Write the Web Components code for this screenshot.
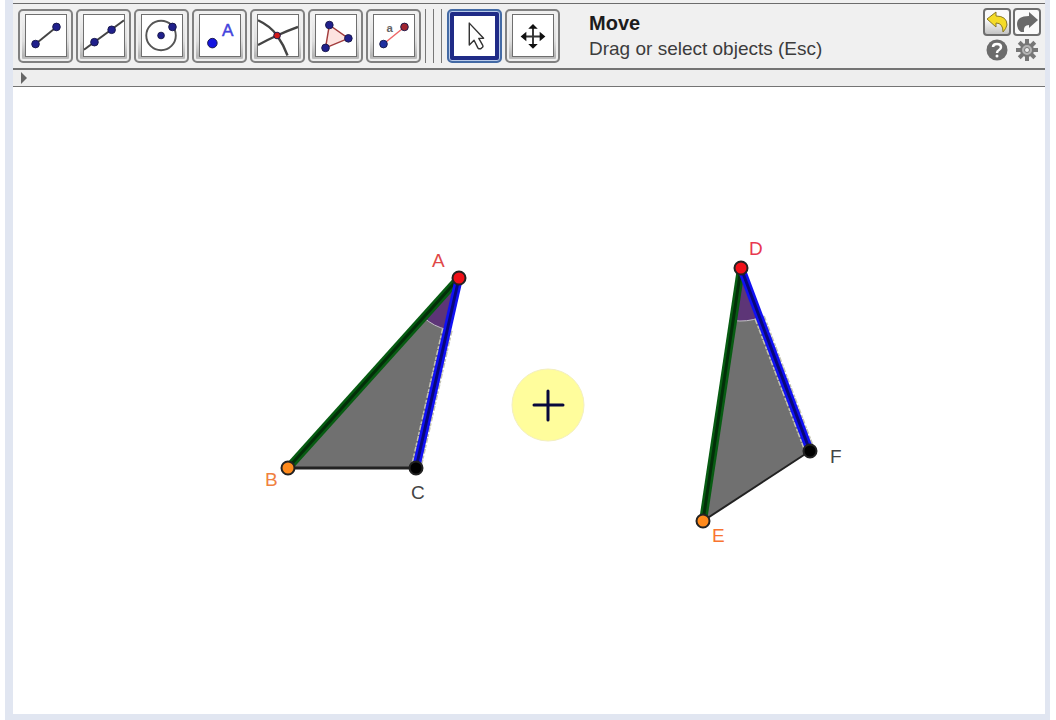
<!DOCTYPE html>
<html lang="en">
<head>
<meta charset="utf-8">
<meta name="viewport" content="width=device-width, initial-scale=1">
<title>Geometry</title>
<style>
body {
  margin: 0;
  background: #fff;
  font-family: "Liberation Sans", Arial, sans-serif;
}
</style>
</head>
<body>
<geo-window>
  <geo-toolbar slot="toolbar" label="Move" help="Drag or select objects (Esc)"></geo-toolbar>
  <geo-view slot="view"></geo-view>
</geo-window>

<script>
'use strict';

const dot = (x, y, r = 4, fill = '#20208c') =>
  `<circle cx="${x}" cy="${y}" r="${r}" fill="${fill}" stroke="#17174a"/>`;

const ICONS = {
  segment: `<path d="M10 30L32 12" stroke="#444" stroke-width="2"/>${dot(10, 30)}${dot(32, 12)}`,
  line: `<path d="M0 36L42 5" stroke="#444" stroke-width="2"/>${dot(11, 28)}${dot(29, 15)}`,
  circle: `<circle cx="20" cy="21" r="15.500" fill="none" stroke="#555" stroke-width="2"/>${dot(20, 21, 3.500)}${dot(32, 12)}`,
  point: `${dot(13, 29, 5, '#1515e0')}<text x="23" y="22" font-size="18" fill="#4343dc" stroke="#4343dc" stroke-width=".5">A</text>`,
  intersect: `<path d="M0 5Q13 11 20 21T31 42M0 31Q9 26 20 21T42 12" fill="none" stroke="#444" stroke-width="2.500"/>${dot(20, 21, 3.500, '#d01818')}`,
  polygon: `<path d="M14 10L34 24L10 34Z" fill="#fde3e0" stroke="#a23c3c" stroke-width="1.500"/>${dot(14, 10)}${dot(34, 24)}${dot(10, 34)}`,
  mirror: `<path d="M10 30L32 12" stroke="#e66" stroke-width="1.500"/>${dot(10, 30, 4, '#2030a0')}${dot(32, 12, 4, '#a02430')}<text x="13" y="17" font-size="12" font-weight="bold" fill="#666">a</text>`,
  arrow: `<path d="M15 8V31L20 26L24 34Q26 36 28 34Q30 33 29 31L25 24H30Z" fill="#fff" stroke="#333" stroke-width="1.500" stroke-linejoin="round"/>`,
  move: `<path d="M21 12V32M11 22H31" stroke="#333" stroke-width="2"/><path d="M21 9L26 14H16ZM21 35L26 30H16ZM8 22L14 17V27ZM34 22L28 17V27Z" fill="#111"/>`
};

class ToolButton extends HTMLElement {
  constructor() {
    super();
    this.attachShadow({mode: 'open'});
  }

  connectedCallback() {
    this.shadowRoot.innerHTML = `
<style>
:host {
  display: block;
}

button {
  box-sizing: border-box;
  display: flex;
  justify-content: center;
  align-items: center;
  width: 55px;
  height: 54px;
  padding: 0 0 1px 1px;
  border: 2px solid #818181;
  border-radius: 5px;
  background: linear-gradient(#f4f4f4, #dedede 60%, #b4b4b4 90%, #c8c8c8);
  box-shadow: inset 0 0 0 2px #efefef;
  font: inherit;
}

svg {
  box-sizing: border-box;
  width: 42px;
  height: 43px;
  border: 1px solid #6f6f6f;
  background: #fff;
}

:host([selected]) button {
  border-color: #436aa5;
  background: #fff;
  box-shadow: inset 0 0 0 1px #b9cbea, inset 0 0 0 5px #1f2b87;
}

:host([selected]) svg {
  border-color: transparent;
  background: none;
}
</style>
<button type="button" aria-label="${this.getAttribute('icon')}">
  <svg viewBox="0 0 42 42" aria-hidden="true">${ICONS[this.getAttribute('icon')]}</svg>
</button>
`;
  }
}

class GeoActions extends HTMLElement {
  constructor() {
    super();
    const teeth = [0, 45, 90, 135, 180, 225, 270, 315].map(angle =>
      `<path d="M12 1V7" transform="rotate(${angle} 12 12)" stroke="#777" stroke-width="4"/>`
    ).join('');
    this.attachShadow({mode: 'open'}).innerHTML = `
<style>
:host {
  display: grid;
  grid-template-columns: 28px 28px;
  column-gap: 2px;
}

button {
  box-sizing: border-box;
  display: flex;
  align-items: center;
  justify-content: center;
  height: 28px;
  padding: 0;
  border: 2px solid #6e6e6e;
  border-radius: 4px;
  background: #fafafa;
}

.undo {
  background: linear-gradient(#fafafa 40%, #c4c4c4);
}

.plain {
  border: none;
  background: none;
}

svg {
  width: 24px;
  height: 24px;
}
</style>
<button class="undo" type="button" aria-label="Undo">
  <svg viewBox="0 0 24 24"><path d="M2 9L11 2V6Q22 6 22 15Q21 19 18 22Q18 13 11 13V17Z" fill="#f5dc28" stroke="#8b7a26"/></svg>
</button>
<button type="button" aria-label="Redo">
  <svg viewBox="0 0 24 24"><path d="M23 10L14 2V6Q2 6 2 14Q2 19 6 22H9Q8 15 14 15V18Z" fill="#696969"/></svg>
</button>
<button class="plain" type="button" aria-label="Help">
  <svg viewBox="0 0 24 24"><circle cx="12" cy="12" r="10.500" fill="#6c6c6c"/><path d="M8 9Q8 6 12 6T16 9Q16 11 14 12T12 15" fill="none" stroke="#fff" stroke-width="2.500"/><circle cx="12" cy="18" r="1.500" fill="#fff"/></svg>
</button>
<button class="plain" type="button" aria-label="Settings">
  <svg viewBox="0 0 24 24">${teeth}<circle cx="12" cy="12" r="6" fill="#b4b4b4" stroke="#777" stroke-width="2"/><circle cx="12" cy="12" r="2.500" fill="#eee" stroke="#777"/></svg>
</button>
`;
  }
}

class GeoToolbar extends HTMLElement {
  constructor() {
    super();
    this.attachShadow({mode: 'open'}).innerHTML = `
<style>
:host {
  display: flex;
  align-items: center;
  gap: 4px;
  padding: 4px 4px 4px 5px;
  border-top: 1px solid #6c6c6c;
  border-bottom: 2px solid #747474;
  background: #f0f0f0;
}

.tools {
  display: flex;
  gap: 3px;
}

.separators {
  display: flex;
  gap: 7px;
  height: 54px;
  margin-right: 1px;
}

.separators span {
  width: 1px;
  background: #777;
}

.help {
  flex: 1;
  margin-left: 25px;
  color: #3c3c3c;
  font-size: 19px;
  line-height: 25px;
}

.help strong {
  display: block;
  color: #1c1c1c;
  font-size: 20px;
}
</style>
<div class="tools">
  <tool-button icon="segment"></tool-button>
  <tool-button icon="line"></tool-button>
  <tool-button icon="circle"></tool-button>
  <tool-button icon="point"></tool-button>
  <tool-button icon="intersect"></tool-button>
  <tool-button icon="polygon"></tool-button>
  <tool-button icon="mirror"></tool-button>
</div>
<div class="separators"><span></span><span></span><span></span></div>
<div class="tools">
  <tool-button icon="arrow" selected></tool-button>
  <tool-button icon="move"></tool-button>
</div>
<div class="help"><strong></strong><span></span></div>
<geo-actions></geo-actions>
`;
  }

  connectedCallback() {
    this.shadowRoot.querySelector('.help strong').textContent = this.getAttribute('label');
    this.shadowRoot.querySelector('.help span').textContent = this.getAttribute('help');
  }
}

// 点の座標とラベルの位置
const TRIANGLES = [
  [
    {name: 'A', x: 459, y: 278, lx: 432, ly: 267, fill: '#f01018', color: '#e04848'},
    {name: 'B', x: 288, y: 468, lx: 265, ly: 486, fill: '#ff8a1c', color: '#f08040'},
    {name: 'C', x: 416, y: 468, lx: 411, ly: 499, fill: '#000', color: '#444'}
  ],
  [
    {name: 'D', x: 741, y: 268, lx: 749, ly: 255, fill: '#f01018', color: '#e83850'},
    {name: 'E', x: 703, y: 521, lx: 712, ly: 542, fill: '#ff8a1c', color: '#f87430'},
    {name: 'F', x: 810, y: 451, lx: 830, ly: 463, fill: '#000', color: '#444'}
  ]
];

class GeoView extends HTMLElement {
  constructor() {
    super();
    this.attachShadow({mode: 'open'}).innerHTML = `
<style>
:host {
  display: block;
  min-height: 0;
  background: #fff;
}

svg {
  display: block;
  width: 100%;
  height: 100%;
}

text {
  font-size: 19px;
}
</style>
<svg viewBox="13 87 1032 627" role="img" aria-label="Triangles ABC and DEF">
  ${TRIANGLES.map(triangle => this.drawTriangle(triangle)).join('')}
  <circle cx="548" cy="405" r="36" fill="#fffd9c" stroke="#f3efc0"/>
  <path d="M534 405H563M548 391V420" stroke="#08083c" stroke-width="3" stroke-linecap="round"/>
</svg>
`;
  }

  // 頂点から距離rだけ離れた辺上の点
  along(from, to, r) {
    const length = Math.hypot(to.x - from.x, to.y - from.y);
    return `${from.x + (to.x - from.x) * r / length} ${from.y + (to.y - from.y) * r / length}`;
  }

  drawTriangle([top, left, right]) {
    const start = this.along(top, right, 53);
    const arc = `A53 53 0 0 1 ${this.along(top, left, 53)}`;
    const side = (p, color) => `
<path d="M${top.x} ${top.y}L${p.x} ${p.y}" stroke="${color}" stroke-width="8"/>
<path d="M${top.x} ${top.y}L${p.x} ${p.y}" stroke="#000" stroke-opacity=".5" stroke-width="3"/>`;

    return `
<path d="M${top.x} ${top.y}L${left.x} ${left.y}L${right.x} ${right.y}Z" fill="#707070"/>
<path d="M${start}L${right.x} ${right.y}" stroke="#c4c4b4" stroke-width="11" stroke-dasharray="5 2 3 1"/>
<path d="M${top.x} ${top.y}L${start}${arc}Z" fill="#5d3577"/>
<path d="M${start}${arc}" fill="none" stroke="#c4bfc8"/>
<path d="M${left.x} ${left.y}L${right.x} ${right.y}" stroke="#222" stroke-width="${left.y === right.y ? 3 : 2}"/>
${side(left, '#075c12')}${side(right, '#1010f4')}
${[top, left, right].map(p => `
<circle cx="${p.x}" cy="${p.y}" r="6.500" fill="${p.fill}" stroke="#222" stroke-width="2"/>
<text x="${p.lx}" y="${p.ly}" fill="${p.color}">${p.name}</text>`).join('')}`;
  }
}

class GeoWindow extends HTMLElement {
  constructor() {
    super();
    this.attachShadow({mode: 'open'}).innerHTML = `
<style>
:host {
  box-sizing: border-box;
  display: flex;
  flex-direction: column;
  height: 100vh;
  margin: 0 6px 0 5px;
  padding-top: 3px;
  border: solid #e1e6f1;
  border-width: 0 5px 6px 8px;
  background: #f0f0f0;
}

.bar {
  display: flex;
  height: 16px;
  padding-left: 8px;
  border-bottom: 1px solid #747474;
  background: #eee;
}

.bar button {
  display: flex;
  align-items: center;
  padding: 0;
  border: none;
  background: none;
}

::slotted(geo-view) {
  flex: 1;
}
</style>
<slot name="toolbar"></slot>
<div class="bar">
  <button type="button" aria-label="Show sidebar">
    <svg width="6" height="12" viewBox="0 0 6 12"><path d="M0 0L6 6L0 12Z" fill="#666"/></svg>
  </button>
</div>
<slot name="view"></slot>
`;
  }
}

customElements.define('tool-button', ToolButton);
customElements.define('geo-actions', GeoActions);
customElements.define('geo-toolbar', GeoToolbar);
customElements.define('geo-view', GeoView);
customElements.define('geo-window', GeoWindow);
</script>
</body>
</html>
